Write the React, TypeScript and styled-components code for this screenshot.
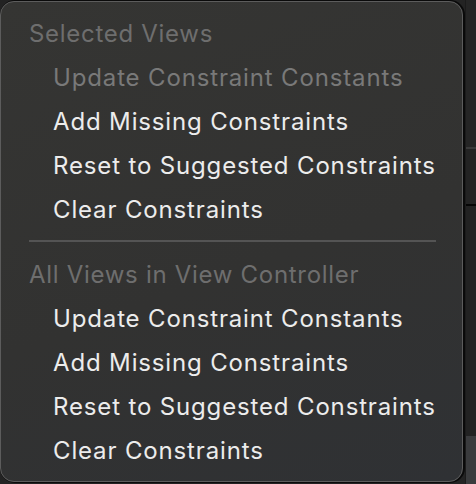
import styled, { createGlobalStyle } from "styled-components";

const GlobalStyle = createGlobalStyle`
  html, body {
    margin: 0;
    padding: 0;
    background: #232323;
  }
  body {
    font-family: Inter, "Noto Sans", "Liberation Sans", sans-serif;
    -webkit-font-smoothing: antialiased;
  }
`;

const Backdrop = styled.div`
  width: 476px;
  height: 484px;
  display: flex;
  overflow: hidden;
  background: #232323;
`;

const Menu = styled.div`
  width: 463px;
  height: 481px;
  box-sizing: border-box;
  margin-top: 1px;
  flex-shrink: 0;
  border: 1.5px solid #5c5c5c;
  border-radius: 14px;
  box-shadow: 1px 0 0 1px #0a0a0a;
  background: linear-gradient(160deg, #353533 0%, #323231 55%, #2f3134 100%);
  padding: 9px 0 0;
  display: flex;
  flex-direction: column;
`;

const SideStrip = styled.div`
  flex: 1;
  margin-left: 2px;
  display: flex;
  flex-direction: column;
  border-left: 1px solid #1b1b1b;
`;

const StripBand = styled.div<{ $h: number; $bg: string; $line?: string }>`
  height: ${(p) => p.$h}px;
  background: ${(p) => p.$bg};
  border-bottom: ${(p) => (p.$line ? `2px solid ${p.$line}` : "none")};
`;

const Header = styled.div`
  height: 44px;
  display: flex;
  align-items: center;
  padding-left: 28px;
  font-size: 24px;
  letter-spacing: 0.7px;
  color: #6e6e6e;
  white-space: nowrap;
`;

const Item = styled.div<{ $disabled?: boolean }>`
  height: 44px;
  display: flex;
  align-items: center;
  padding-left: 52px;
  font-size: 24px;
  letter-spacing: 0.85px;
  color: ${(p) => (p.$disabled ? "#797979" : "#ececec")};
  white-space: nowrap;
`;

const Separator = styled.div`
  height: 2px;
  margin: 9px 26px 10px 28px;
  background: #545454;
`;

type Section = { title: string; items: { label: string; disabled?: boolean }[] };

const sections: Section[] = [
  {
    title: "Selected Views",
    items: [
      { label: "Update Constraint Constants", disabled: true },
      { label: "Add Missing Constraints" },
      { label: "Reset to Suggested Constraints" },
      { label: "Clear Constraints" },
    ],
  },
  {
    title: "All Views in View Controller",
    items: [
      { label: "Update Constraint Constants" },
      { label: "Add Missing Constraints" },
      { label: "Reset to Suggested Constraints" },
      { label: "Clear Constraints" },
    ],
  },
];

export default function App() {
  return (
    <>
      <GlobalStyle />
      <Backdrop>
        <Menu>
          {sections.map((s, i) => (
            <div key={s.title}>
              {i > 0 && <Separator />}
              <Header>{s.title}</Header>
              {s.items.map((it) => (
                <Item key={it.label} $disabled={it.disabled}>
                  {it.label}
                </Item>
              ))}
            </div>
          ))}
        </Menu>
        <SideStrip>
          <StripBand $h={148} $bg="#252525" $line="#3a3a3a" />
          <StripBand $h={56} $bg="#232323" $line="#050505" />
          <StripBand $h={232} $bg="#222222" />
          <StripBand $h={48} $bg="#3a3b3d" />
        </SideStrip>
      </Backdrop>
    </>
  );
}
